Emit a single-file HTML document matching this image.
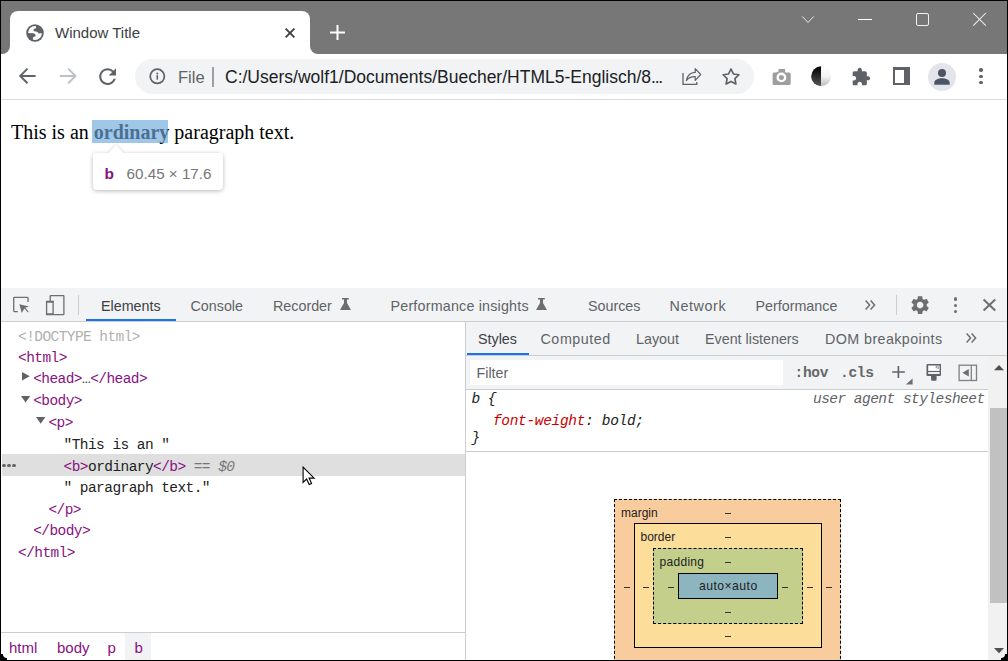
<!DOCTYPE html>
<html><head><meta charset="utf-8">
<style>
*{margin:0;padding:0;box-sizing:border-box}
html,body{width:1008px;height:661px;overflow:hidden;background:#fff}
body{position:relative;font-family:"Liberation Sans",sans-serif}
.a{position:absolute}
.t{position:absolute;white-space:pre;line-height:1}
.mono{font-family:"Liberation Mono",monospace}
.tag{color:#881280}
</style></head><body>
  <!-- title bar -->
  <div class="a" style="left:0;top:0;width:1008px;height:54px;background:#777"></div>
  <div class="a" style="left:10px;top:11px;width:300px;height:43px;background:#fff;border-radius:8px 8px 0 0"></div>
  <div class="a" style="left:2px;top:46px;width:8px;height:8px;background:#fff"></div>
  <div class="a" style="left:2px;top:46px;width:8px;height:8px;background:#777;border-radius:0 0 8px 0"></div>
  <div class="a" style="left:310px;top:46px;width:8px;height:8px;background:#fff"></div>
  <div class="a" style="left:310px;top:46px;width:8px;height:8px;background:#777;border-radius:0 0 0 8px"></div>


  <!-- tab content -->
  <svg class="a" style="left:26px;top:24px" width="18" height="18" viewBox="0 0 18 18">
    <defs><clipPath id="gc"><circle cx="9" cy="9" r="7.8"/></clipPath></defs>
    <circle cx="9" cy="9" r="8.8" fill="#5f6368"/>
    <circle cx="9" cy="9" r="6.9" fill="#fff"/>
    <g clip-path="url(#gc)" fill="#5f6368">
    <path d="M10 0 L10 4.2 Q8 4.5 7.6 5.6 L7.6 7 Q10.3 7.3 11.3 8 Q12.5 8.6 12.7 9.6 L18 8.8 L18 0 Z"/>
    <path d="M0 8.9 L7.5 9.3 Q9.5 10 9.6 11.3 L9.4 12.6 Q7.4 12.8 7 13.6 L6.6 18 L0 18 Z"/>
    </g>
  </svg>
  <div class="t" style="left:55px;top:25px;font-size:15px;color:#3c4043">Window Title</div>
  <svg class="a" style="left:284px;top:27px" width="12" height="12" viewBox="0 0 12 12"><path d="M1.6 1.6L10.4 10.4M10.4 1.6L1.6 10.4" stroke="#3c4043" stroke-width="1.8"/></svg>
  <svg class="a" style="left:329px;top:24px" width="17" height="17" viewBox="0 0 17 17"><path d="M8.5 1V16M1 8.5H16" stroke="#fff" stroke-width="2"/></svg>
  <!-- window controls -->
  <svg class="a" style="left:800.4px;top:14px" width="16" height="11" viewBox="0 0 16 11"><path d="M2.2 2.4L8 8.4L13.8 2.4" stroke="#eee" stroke-width="0.95" fill="none"/></svg>
  <div class="a" style="left:858px;top:19px;width:14px;height:1px;background:#fff"></div>
  <div class="a" style="left:915.5px;top:12.8px;width:13.6px;height:13.2px;border:1px solid #f2f2f2;border-radius:2px"></div>
  <svg class="a" style="left:971px;top:11px" width="16" height="16" viewBox="0 0 16 16"><path d="M2.2 2L14.8 14.6M14.8 2L2.2 14.6" stroke="#f2f2f2" stroke-width="1.05"/></svg>

  <!-- toolbar -->
  <div class="a" style="left:0;top:99px;width:1008px;height:1px;background:#dadce0"></div>
  <div class="a" style="left:135px;top:59px;width:619px;height:35px;background:#f1f3f4;border-radius:18px"></div>


  <!-- toolbar icons -->
  <svg class="a" style="left:16px;top:66px" width="24" height="20" viewBox="0 0 24 20"><path d="M4.2 10H19.6M11.5 2.7L4.2 10L11.5 17.2" stroke="#5f6368" stroke-width="1.9" fill="none"/></svg>
  <svg class="a" style="left:56px;top:66px" width="24" height="20" viewBox="0 0 24 20"><path d="M3.8 10H19.5M12.2 2.7L19.5 10L12.2 17.2" stroke="#bdc1c6" stroke-width="1.9" fill="none"/></svg>
  <svg class="a" style="left:94.8px;top:63.5px" width="25.2" height="25.2" viewBox="0 0 24 24"><path d="M17.65 6.35C16.2 4.9 14.21 4 12 4c-4.42 0-7.99 3.58-7.99 8s3.57 8 7.99 8c3.73 0 6.84-2.55 7.73-6h-2.08c-.82 2.33-3.04 4-5.65 4-3.31 0-6-2.69-6-6s2.69-6 6-6c1.66 0 3.14.69 4.22 1.78L13 11h7V4l-2.35 2.35z" fill="#5f6368"/></svg>
  <svg class="a" style="left:147px;top:66px" width="21" height="21" viewBox="0 0 21 21"><circle cx="10.3" cy="10.3" r="7.1" stroke="#5f6368" stroke-width="1.75" fill="none"/><circle cx="10.3" cy="7.4" r="1" fill="#5f6368"/><path d="M10.3 9.2V13.6" stroke="#5f6368" stroke-width="1.6"/></svg>
  <div class="t" style="left:178px;top:68.5px;font-size:16.5px;color:#5f6368">File</div>
  <div class="a" style="left:212px;top:67px;width:2px;height:20px;background:#9aa0a6"></div>
  <div class="t" style="left:225px;top:68.7px;font-size:17.5px;color:#202124">C:/Users/wolf1/Documents/Buecher/HTML5-Englisch/8<span style="letter-spacing:-1.2px">...</span></div>
  <svg class="a" style="left:680px;top:66px" width="24" height="22" viewBox="0 0 24 22"><path d="M3 7V18.4H16.8V16" stroke="#5f6368" stroke-width="1.3" fill="none"/><path d="M6.4 14.6C7.3 9.8 10.6 6.6 15.2 6.4V2.6L20.7 8.5L15.2 14.4V10.6C10.8 10.4 8.4 11.8 6.4 14.6Z" stroke="#5f6368" stroke-width="1.2" fill="none" stroke-linejoin="round"/></svg>
  <svg class="a" style="left:720px;top:66px" width="22" height="21" viewBox="0 0 22 21"><path d="M11.00 3.00 L13.41 7.98 L18.89 8.74 L14.90 12.57 L15.88 18.01 L11.00 15.40 L6.12 18.01 L7.10 12.57 L3.11 8.74 L8.59 7.98Z" stroke="#5f6368" stroke-width="1.7" fill="none" stroke-linejoin="round"/></svg>
  <svg class="a" style="left:770px;top:66px" width="24" height="21" viewBox="0 0 24 21"><path d="M4.2 6.4H6.2L7.6 5.5L8.5 6.4V3H15.1V6.4H19.2Q20.7 6.4 20.7 7.9V17.4Q20.7 18.9 19.2 18.9H4.1Q2.6 18.9 2.6 17.4V7.9Q2.6 6.4 4.1 6.4Z" fill="#9e9e9e"/><circle cx="11.4" cy="11.4" r="4.9" fill="#fff"/><circle cx="11.4" cy="11.4" r="2.5" fill="#9e9e9e"/></svg>
  <svg class="a" style="left:810px;top:65px" width="24" height="23" viewBox="0 0 24 23"><defs><linearGradient id="hd" x1="0" y1="0" x2="0" y2="1"><stop offset="0" stop-color="#000"/><stop offset="1" stop-color="#555"/></linearGradient><linearGradient id="hl" x1="0" y1="0" x2="0" y2="1"><stop offset="0" stop-color="#fff"/><stop offset="0.5" stop-color="#f4f4f4"/><stop offset="1" stop-color="#bbb"/></linearGradient></defs><path d="M11.2 1.2A10 10 0 0 0 11.2 21.2Z" fill="url(#hd)"/><path d="M11.2 1.2A10 10 0 0 1 11.2 21.2Z" fill="url(#hl)"/></svg>
  <svg class="a" style="left:851.4px;top:66.8px" width="20" height="20" viewBox="0 0 24 24"><path d="M20.5 11H19V7c0-1.1-.9-2-2-2h-4V3.5C13 2.12 11.88 1 10.5 1S8 2.12 8 3.5V5H4c-1.1 0-1.99.9-1.99 2v3.8H3.5c1.49 0 2.7 1.21 2.7 2.7s-1.21 2.7-2.7 2.7H2V20c0 1.1.9 2 2 2h3.8v-1.5c0-1.490 1.21-2.7 2.7-2.7 1.49 0 2.7 1.21 2.7 2.7V22H17c1.1 0 2-.9 2-2v-4h1.5c1.38 0 2.5-1.12 2.5-2.5S21.88 11 20.5 11z" fill="#5f6368"/></svg>
  <div class="a" style="left:892.5px;top:67.3px;width:17.5px;height:17.4px;background:#5f6368"></div>
  <div class="a" style="left:895px;top:69.7px;width:9px;height:12.9px;background:#fff"></div>
  <div class="a" style="left:928px;top:63px;width:28px;height:28px;border-radius:50%;background:#e3e5ea"></div>
  <div class="a" style="left:938px;top:69px;width:8px;height:8px;border-radius:50%;background:#4d5466"></div>
  <svg class="a" style="left:934px;top:78px" width="16" height="7" viewBox="0 0 16 7"><path d="M0.3 6.7V4.6C0.3 2 4 0.2 8 0.2S15.7 2 15.7 4.6V6.7Z" fill="#4d5466"/></svg>
  <div class="a" style="left:979.3px;top:68.2px;width:3.5px;height:3.5px;border-radius:50%;background:#5f6368"></div>
  <div class="a" style="left:979.3px;top:74.5px;width:3.5px;height:3.5px;border-radius:50%;background:#5f6368"></div>
  <div class="a" style="left:979.3px;top:80.7px;width:3.5px;height:3.5px;border-radius:50%;background:#5f6368"></div>


  <!-- page content -->
  <div class="t" style="left:11px;top:120.5px;font-family:'Liberation Serif',serif;font-size:20px;line-height:22px;color:#000">This is an <b>ordinary</b> paragraph text.</div>
  <div class="a" style="left:92.3px;top:120.3px;width:76px;height:22.3px;background:rgba(111,168,220,0.66)"></div>
  <!-- tooltip -->
  <div class="a" style="left:93px;top:153px;width:130px;height:37px;background:#fff;border-radius:4px;box-shadow:0 1px 4px rgba(0,0,0,0.28)"></div>
  <svg class="a" style="left:104px;top:144px" width="24" height="11" viewBox="0 0 24 11"><path d="M3 10L12 1L21 10Z" fill="#fff" style="filter:drop-shadow(0 -1px 1px rgba(0,0,0,0.12))"/></svg>
  <div class="a" style="left:93px;top:153px;width:130px;height:5px;background:#fff;border-radius:4px 4px 0 0"></div>
  <div class="t" style="left:104.6px;top:165.6px;font-size:15.5px;font-weight:bold;color:#881280">b</div>
  <div class="t" style="left:126.6px;top:166px;font-size:15.2px;color:#777">60.45 × 17.6</div>

  <!-- devtools -->
  <div class="a" style="left:0;top:288px;width:1008px;height:33px;background:#f1f3f4"></div>
  <div class="a" style="left:0;top:321px;width:1008px;height:1px;background:#cbcdd1"></div>
  <div class="a" style="left:465px;top:322px;width:1px;height:339px;background:#cbcdd1"></div>
  <div class="a" style="left:466px;top:322px;width:542px;height:33px;background:#f1f3f4"></div>
  <div class="a" style="left:466px;top:355px;width:542px;height:1px;background:#cbcdd1"></div>
  <div class="a" style="left:466px;top:356px;width:522px;height:33px;background:#f1f3f4"></div>
  <div class="a" style="left:466px;top:389px;width:522px;height:1px;background:#cbcdd1"></div>
  <div class="a" style="left:988px;top:356px;width:20px;height:305px;background:#f1f1f1"></div>
  <div class="a" style="left:0;top:632px;width:465px;height:1px;background:#cbcdd1"></div>

  <!-- devtools top bar -->
  <div class="t" style="left:101px;top:299.10px;font-size:14.3px;color:#3c4043;">Elements</div>
  <div class="a" style="left:86px;top:319px;width:90px;height:2px;background:#1a73e8"></div>
  <div class="t" style="left:190.5px;top:299.10px;font-size:14.3px;color:#5f6368;">Console</div>
  <div class="t" style="left:273px;top:299.10px;font-size:14.3px;color:#5f6368;">Recorder</div>
  <svg class="a" style="left:340px;top:297px" width="12" height="14" viewBox="0 0 12 14"><path d="M2 1H8.8V2.5H7V6L11 13H0L4 6V2.5H2Z" fill="#6e6e6e" stroke-linejoin="round"/></svg>
  <div class="t" style="left:390.5px;top:299.10px;font-size:14.3px;color:#5f6368;letter-spacing:0.2px">Performance insights</div>
  <svg class="a" style="left:535.5px;top:297px" width="12" height="14" viewBox="0 0 12 14"><path d="M2 1H8.8V2.5H7V6L11 13H0L4 6V2.5H2Z" fill="#6e6e6e" stroke-linejoin="round"/></svg>
  <div class="t" style="left:588px;top:299.10px;font-size:14.3px;color:#5f6368;">Sources</div>
  <div class="t" style="left:669.5px;top:299.10px;font-size:14.3px;color:#5f6368;letter-spacing:0.6px">Network</div>
  <div class="t" style="left:755.5px;top:299.10px;font-size:14.3px;color:#5f6368;">Performance</div>
  <svg class="a" style="left:864px;top:299px" width="14" height="12" viewBox="0 0 14 12"><path d="M1.6 1.6L5.6 6L1.6 10.4M6.6 1.6L10.6 6L6.6 10.4" stroke="#6e6e6e" stroke-width="1.5" fill="none"/></svg>
  <div class="a" style="left:896px;top:295px;width:1px;height:20px;background:#cbcdd1"></div>
  <svg class="a" style="left:908.9px;top:294.4px" width="22.2" height="22.2" viewBox="0 0 24 24"><path d="M19.14 12.94c.04-.3.06-.61.06-.94 0-.32-.02-.64-.07-.94l2.03-1.58c.18-.14.23-.41.12-.61l-1.92-3.32c-.12-.22-.37-.29-.59-.22l-2.39.96c-.5-.38-1.030-.7-1.62-.94l-.36-2.54c-.04-.24-.24-.41-.48-.41h-3.84c-.24 0-.43.17-.47.41l-.36 2.54c-.59.24-1.13.57-1.62.94l-2.39-.96c-.22-.08-.47 0-.59.22L2.74 8.87c-.12.21-.08.47.12.61l2.03 1.58c-.05.3-.09.63-.09.94s.02.64.07.94l-2.03 1.58c-.18.14-.23.41-.12.61l1.92 3.32c.12.22.37.29.59.22l2.39-.96c.5.38 1.03.7 1.62.94l.36 2.54c.05.24.24.41.48.41h3.84c.24 0 .44-.17.47-.41l.36-2.54c.59-.24 1.13-.56 1.62-.94l2.39.96c.22.08.47 0 .59-.22l1.92-3.32c.12-.22.07-.47-.12-.61l-2.01-1.58zM12 15.6c-1.98 0-3.6-1.62-3.6-3.6s1.62-3.6 3.6-3.6 3.6 1.62 3.6 3.6-1.62 3.6-3.6 3.6z" fill="#6e6e6e"/></svg>
  <div class="a" style="left:953.6px;top:297.2px;width:3.4px;height:3.4px;border-radius:50%;background:#6e6e6e"></div>
  <div class="a" style="left:953.6px;top:303.9px;width:3.4px;height:3.4px;border-radius:50%;background:#6e6e6e"></div>
  <div class="a" style="left:953.6px;top:310px;width:3.4px;height:3.4px;border-radius:50%;background:#6e6e6e"></div>
  <svg class="a" style="left:982px;top:298px" width="15" height="14" viewBox="0 0 15 14"><path d="M1.6 1.5L13.2 12.5M13.2 1.5L1.6 12.5" stroke="#6e6e6e" stroke-width="2"/></svg>
  <!-- inspect + device icons -->
  <svg class="a" style="left:11px;top:295px" width="22" height="20" viewBox="0 0 22 20"><path d="M6.8 16.6H3.5Q2.7 16.6 2.7 15.8V3.1Q2.7 2.3 3.5 2.3H16.2Q17 2.3 17 3.1V7" stroke="#6e6e6e" stroke-width="1.3" fill="none"/><path d="M8.4 9.3L18 11.6L14.2 12.8L17.6 16.6L16.9 17.4L13.4 13.6L10.7 17.9Z" fill="#6e6e6e"/></svg>
  <svg class="a" style="left:44px;top:294px" width="22" height="22" viewBox="0 0 22 22"><path d="M6.2 7.3V2.3Q6.2 1.6 6.9 1.6H19.2Q19.9 1.6 19.9 2.3V19.9Q19.9 20.6 19.2 20.6H9.6" stroke="#6e6e6e" stroke-width="1.3" fill="none"/><path d="M2.6 7.4H9.1V20.6H2.6Z" stroke="#6e6e6e" stroke-width="1.3" fill="none"/><path d="M2 7.3H9.7V8.7H2ZM2 19.2H9.7V20.8H2Z" fill="#6e6e6e"/></svg>
  <div class="a" style="left:78px;top:295px;width:1px;height:20px;background:#cbcdd1"></div>

  <!-- dom tree -->
  <div class="a" style="left:2px;top:454px;width:463px;height:21.5px;background:#dfdfdf"></div>
  <div class="t mono" style="left:18px;top:329.59px;font-size:14.5px;letter-spacing:-0.57px;color:#b0b0b0">&lt;!DOCTYPE html&gt;</div>
  <div class="t mono" style="left:18px;top:350.79px;font-size:14.5px;letter-spacing:-0.57px;"><span class="tag">&lt;html&gt;</span></div>
  <div class="t mono" style="left:33.2px;top:372.39px;font-size:14.5px;letter-spacing:-0.57px;"><span class="tag">&lt;head&gt;</span><span style="color:#303942">…</span><span class="tag">&lt;/head&gt;</span></div>
  <div class="t mono" style="left:33.2px;top:394.29px;font-size:14.5px;letter-spacing:-0.57px;"><span class="tag">&lt;body&gt;</span></div>
  <div class="t mono" style="left:48.4px;top:415.89px;font-size:14.5px;letter-spacing:-0.57px;"><span class="tag">&lt;p&gt;</span></div>
  <div class="t mono" style="left:63.6px;top:437.69px;font-size:14.5px;letter-spacing:-0.57px;color:#222">"This is an "</div>
  <div class="t mono" style="left:63.6px;top:459.59px;font-size:14.5px;letter-spacing:-0.57px;"><span class="tag">&lt;b&gt;</span><span style="color:#222">ordinary</span><span class="tag">&lt;/b&gt;</span> <i style="color:#777">== $0</i></div>
  <div class="t mono" style="left:63.6px;top:480.79px;font-size:14.5px;letter-spacing:-0.57px;color:#222">" paragraph text."</div>
  <div class="t mono" style="left:48.4px;top:502.59px;font-size:14.5px;letter-spacing:-0.57px;"><span class="tag">&lt;/p&gt;</span></div>
  <div class="t mono" style="left:33.2px;top:524.49px;font-size:14.5px;letter-spacing:-0.57px;"><span class="tag">&lt;/body&gt;</span></div>
  <div class="t mono" style="left:18px;top:545.89px;font-size:14.5px;letter-spacing:-0.57px;"><span class="tag">&lt;/html&gt;</span></div>
  <svg class="a" style="left:21.8px;top:372.3px" width="8" height="9" viewBox="0 0 8 9"><path d="M0 0L7.8 4.25L0 8.5Z" fill="#5f6368"/></svg>
  <svg class="a" style="left:21.2px;top:396px" width="10" height="7" viewBox="0 0 10 7"><path d="M0 0H9.2L4.6 6.6Z" fill="#5f6368"/></svg>
  <svg class="a" style="left:36px;top:417px" width="10" height="7" viewBox="0 0 10 7"><path d="M0 0H9.4L4.7 6.8Z" fill="#5f6368"/></svg>
  <div class="a" style="left:2.4px;top:464px;width:3.2px;height:3.2px;background:#666;border-radius:50%"></div>
  <div class="a" style="left:7.4px;top:464px;width:3.2px;height:3.2px;background:#666;border-radius:50%"></div>
  <div class="a" style="left:12.4px;top:464px;width:3.2px;height:3.2px;background:#666;border-radius:50%"></div>

  <!-- breadcrumbs -->
  <div class="a" style="left:125px;top:633px;width:26px;height:27px;background:#f1f3f4"></div>
  <div class="t" style="left:9px;top:640.00px;font-size:15px;color:#881280;">html</div>
  <div class="t" style="left:57px;top:640.00px;font-size:15px;color:#881280;">body</div>
  <div class="t" style="left:107.5px;top:640.00px;font-size:15px;color:#881280;">p</div>
  <div class="t" style="left:134.5px;top:640.00px;font-size:15px;color:#881280;">b</div>
  <svg class="a" style="left:301.6px;top:465.5px" width="14" height="20" viewBox="0 0 14 20"><path d="M1.1 1.1V16.4L4.6 13L7.2 18.6L9.6 17.5L7.1 12.1H12.1Z" fill="#fff" stroke="#000" stroke-width="1.1" stroke-linejoin="miter"/></svg>

  <!-- styles pane -->
  <div class="t" style="left:478px;top:331.70px;font-size:14.3px;color:#3c4043;">Styles</div>
  <div class="a" style="left:467px;top:353px;width:62px;height:2px;background:#1a73e8"></div>
  <div class="t" style="left:540.5px;top:331.70px;font-size:14.3px;color:#5f6368;letter-spacing:0.55px">Computed</div>
  <div class="t" style="left:636px;top:331.70px;font-size:14.3px;color:#5f6368;">Layout</div>
  <div class="t" style="left:705px;top:331.70px;font-size:14.3px;color:#5f6368;">Event listeners</div>
  <div class="t" style="left:825px;top:331.70px;font-size:14.3px;color:#5f6368;letter-spacing:0.42px">DOM breakpoints</div>
  <svg class="a" style="left:965px;top:332px" width="14" height="12" viewBox="0 0 14 12"><path d="M1.6 1.6L5.6 6L1.6 10.4M6.6 1.6L10.6 6L6.6 10.4" stroke="#6e6e6e" stroke-width="1.5" fill="none"/></svg>
  <div class="a" style="left:470px;top:360px;width:313px;height:25px;background:#fff"></div>
  <div class="t" style="left:476.5px;top:365.70px;font-size:14.3px;color:#5f6368;">Filter</div>
  <div class="t mono" style="left:794.5px;top:366.39px;font-size:14.5px;letter-spacing:-0.53px;font-weight:bold;color:#666;letter-spacing:-0.3px">:hov</div>
  <div class="t mono" style="left:840px;top:366.39px;font-size:14.5px;letter-spacing:-0.53px;font-weight:bold;color:#666;letter-spacing:-0.3px">.cls</div>
  <svg class="a" style="left:890px;top:364px" width="24" height="22" viewBox="0 0 24 22"><path d="M8.4 2V13.9M2.2 8H14.8" stroke="#5f6368" stroke-width="1.6"/><path d="M15.8 20.6H22.6V14.4Z" fill="#6e6e6e"/></svg>
  <svg class="a" style="left:924px;top:362px" width="20" height="20" viewBox="0 0 20 20"><path d="M3.4 2H17V12.9Q17 13.9 16 13.9H12.6V17.6Q12.6 18.8 11.4 18.8H8.3Q7.1 18.8 7.1 17.6V13.9H3.4Q2.5 13.9 2.5 12.9V2.9Q2.5 2 3.4 2Z" fill="#5f6368"/><path d="M4.2 3.5H15.6V8.9H4.2Z" fill="#fff"/><path d="M4.2 10.1H15.6V11.9H4.2Z" fill="#fff"/><path d="M11.8 3.5V6.2H12.6V3.5ZM13.7 3.5V6.9H14.5V3.5Z" fill="#5f6368"/></svg>
  <svg class="a" style="left:956px;top:362px" width="23" height="21" viewBox="0 0 23 21"><rect x="3.1" y="3.2" width="17.4" height="15.3" fill="none" stroke="#808080" stroke-width="1.3"/><path d="M15.3 3.2V18.5" stroke="#808080" stroke-width="1.3"/><path d="M12.8 6.9V14.4L6.4 10.65Z" fill="#6e6e6e"/></svg>
  <svg class="a" style="left:993px;top:364px" width="12" height="7" viewBox="0 0 12 7"><path d="M1 6.2H11L6 1Z" fill="#505050"/></svg>
  <svg class="a" style="left:993px;top:647px" width="12" height="7" viewBox="0 0 12 7"><path d="M1 1H11L6 6.2Z" fill="#505050"/></svg>
  <div class="a" style="left:990px;top:408px;width:17px;height:195px;background:#c1c1c1"></div>
  <div class="t mono" style="left:471.5px;top:392.09px;font-size:14.5px;letter-spacing:-0.53px;"><i style="color:#222">b {</i></div>
  <div class="t mono" style="left:813px;top:392.09px;font-size:14.5px;letter-spacing:-0.53px;"><i style="color:#5f6368">user agent stylesheet</i></div>
  <div class="t mono" style="left:493px;top:413.79px;font-size:14.5px;letter-spacing:-0.33px;"><i><span style="color:#c80000">font-weight</span><span style="color:#222">: bold;</span></i></div>
  <div class="t mono" style="left:471.5px;top:431.39px;font-size:14.5px;letter-spacing:-0.53px;"><i style="color:#222">}</i></div>
  <div class="a" style="left:466px;top:451px;width:522px;height:1px;background:#cbcdd1"></div>

  <!-- box model -->
  <div class="a" style="left:614px;top:499px;width:227px;height:170px;border:1px dashed #000;background:#f9cc9d"></div>
  <div class="a" style="left:634px;top:523px;width:188px;height:125px;border:1px solid #000;background:#fddd9a"></div>
  <div class="a" style="left:653px;top:548px;width:150px;height:76px;border:1px dashed #000;background:#c3cf8a"></div>
  <div class="a" style="left:678px;top:573px;width:100px;height:26px;border:1px solid #000;background:#8cb5c0"></div>
  <div class="t" style="left:621px;top:506.64px;font-size:12px;color:#222;">margin</div>
  <div class="t" style="left:640.5px;top:530.84px;font-size:12px;color:#222;">border</div>
  <div class="t" style="left:659.5px;top:555.64px;font-size:12px;color:#222;letter-spacing:0.3px">padding</div>
  <div class="t" style="left:699px;top:580.47px;font-size:12.2px;color:#222;letter-spacing:0.45px">auto×auto</div>
  <div class="a" style="left:725.0px;top:512.7px;width:6px;height:1px;background:#333"></div>
  <div class="a" style="left:725.0px;top:537.0px;width:6px;height:1px;background:#333"></div>
  <div class="a" style="left:725.0px;top:561.8px;width:6px;height:1px;background:#333"></div>
  <div class="a" style="left:624.0px;top:586.5px;width:6px;height:1px;background:#333"></div>
  <div class="a" style="left:642.8px;top:586.5px;width:6px;height:1px;background:#333"></div>
  <div class="a" style="left:667.8px;top:586.5px;width:6px;height:1px;background:#333"></div>
  <div class="a" style="left:782.1px;top:586.5px;width:6px;height:1px;background:#333"></div>
  <div class="a" style="left:807.0px;top:586.5px;width:6px;height:1px;background:#333"></div>
  <div class="a" style="left:826.3px;top:586.5px;width:6px;height:1px;background:#333"></div>
  <div class="a" style="left:725.0px;top:611.5px;width:6px;height:1px;background:#333"></div>
  <div class="a" style="left:725.0px;top:635.5px;width:6px;height:1px;background:#333"></div>

  <!-- window border -->
  <div class="a" style="left:0;top:0;width:1008px;height:661px;border:1px solid #000"></div>
  <div class="a" style="left:1px;top:654px;width:6px;height:6px;background:radial-gradient(circle at 100% 0,transparent 3.6px,#000 4.6px)"></div>
  <div class="a" style="left:1001px;top:654px;width:6px;height:6px;background:radial-gradient(circle at 0 0,transparent 3.6px,#000 4.6px)"></div>
</body></html>
